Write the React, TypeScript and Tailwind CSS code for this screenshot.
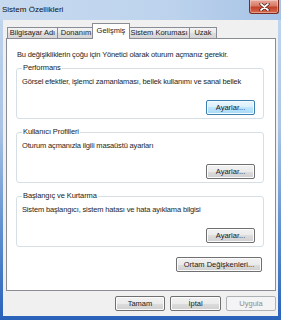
import React from "react";

const font = "font-['Liberation_Sans',Arial,sans-serif]";

function WinButton({
  label,
  width,
  focused,
  disabled,
}: {
  label: string;
  width: string;
  focused?: boolean;
  disabled?: boolean;
}) {
  const look = disabled
    ? "border-[#adb2b5] bg-[#f4f4f4] text-[#8d8d8d]"
    : focused
      ? "border-[#3c7fb1] bg-[linear-gradient(#eaf6fd,#d9f0fc_50%,#bee6fd_50%,#a7d9f5)] text-[#1a1a1a] shadow-[inset_0_0_0_1px_#f4fbff]"
      : "border-[#707070] bg-[linear-gradient(#f2f2f2,#ebebeb_50%,#dddddd_50%,#cfcfcf)] text-[#1a1a1a] shadow-[inset_0_0_0_1px_#fbfbfb]";
  return (
    <div
      className={`${width} flex h-[15px] items-center justify-center rounded-[2px] border text-[7.5px] leading-none ${look}`}
    >
      {label}
    </div>
  );
}

function GroupBox({ title, text, className }: { title: string; text: string; className?: string }) {
  return (
    <fieldset
      className={`ml-[9px] mr-[11px] flex flex-col rounded-[3px] border border-[#d5dfe5] px-[5px] pb-[3px] ${className ?? ""}`}
    >
      <legend className="px-[1px] text-[7.5px] leading-[10px] tracking-[-0.1px] text-[#222]">{title}</legend>
      <p className="mt-[4px] text-[7.5px] leading-[10px] tracking-[-0.15px] text-[#1e1e1e]">{text}</p>
      <div className="mr-[3px] mt-[13px] self-end">
        <WinButton label="Ayarlar..." width="w-[49px]" focused={title === "Performans"} />
      </div>
    </fieldset>
  );
}

function Tab({ label, className, selected }: { label: string; className: string; selected?: boolean }) {
  return selected ? (
    <div
      className={`relative z-20 flex h-[16px] items-start justify-center border border-b-0 border-[#898c95] bg-white pt-[2px] text-[7.5px] leading-[10px] text-[#1e1e1e] ${className}`}
    >
      {label}
    </div>
  ) : (
    <div
      className={`flex h-[12px] items-center justify-center border border-[#898c95] bg-[linear-gradient(#f4f4f4,#e6e6e6_50%,#dddddd_50%,#d6d6d6)] text-[7.5px] leading-none text-[#1e1e1e] ${className}`}
    >
      {label}
    </div>
  );
}

export default function App() {
  return (
    <div
      className={`${font} flex h-[320px] w-[281px] flex-col overflow-hidden bg-[linear-gradient(180deg,#c3d7ee_0%,#aac4e5_40%,#5f8fcf_72%,#2a62ba_100%)]`}
    >
      <div className="flex h-[20px] shrink-0 items-start justify-between bg-[linear-gradient(90deg,#c6d9ef,#bdd3ed_60%,#a6c2e5)]">
        <span className="ml-[2px] mt-[5px] text-[8px] leading-[10px] text-[#111]">Sistem Özellikleri</span>
        <div className="mr-[2px] flex h-[14px] w-[30px] items-center justify-center rounded-b-[3px] border border-t-0 border-[#7a2a1e] bg-[linear-gradient(#e9a89a,#d77b66_45%,#c2412a_55%,#d86a4f)] shadow-[inset_0_0_0_1px_rgba(255,255,255,0.35)]">
          <svg width="11" height="8" viewBox="0 0 11 8">
            <path d="M2 1 L9 7 M9 1 L2 7" stroke="#4a1a12" strokeWidth="3.2" strokeLinecap="round" />
            <path d="M2 1 L9 7 M9 1 L2 7" stroke="#ffffff" strokeWidth="1.7" strokeLinecap="round" />
          </svg>
        </div>
      </div>

      <div className="mx-[3px] mb-[4px] flex flex-1 flex-col bg-[#f0f0f0] pl-[3px] pr-[2px] pt-[3px]">
        <div className="relative z-10 flex h-[16px] items-end">
          <Tab label="Bilgisayar Adı" className="ml-[1px] w-[51px]" />
          <Tab label="Donanım" className="-ml-px w-[38px]" />
          <Tab label="Gelişmiş" className="-ml-[3px] w-[38px]" selected />
          <Tab label="Sistem Koruması" className="-ml-[2px] w-[62px]" />
          <Tab label="Uzak" className="-ml-px w-[28px]" />
        </div>

        <div className="-mt-px flex h-[253px] flex-col border border-[#898c95] bg-white">
          <p className="ml-[10px] mt-[11px] text-[7.5px] leading-[10px] tracking-[-0.15px] text-[#1e1e1e]">
            Bu değişikliklerin çoğu için Yönetici olarak oturum açmanız gerekir.
          </p>
          <GroupBox
            title="Performans"
            text="Görsel efektler, işlemci zamanlaması, bellek kullanımı ve sanal bellek"
            className="mt-[3px]"
          />
          <GroupBox
            title="Kullanıcı Profilleri"
            text="Oturum açmanızla ilgili masaüstü ayarları"
            className="mt-[8px]"
          />
          <GroupBox
            title="Başlangıç ve Kurtarma"
            text="Sistem başlangıcı, sistem hatası ve hata ayıklama bilgisi"
            className="mt-[8px]"
          />
          <div className="mr-[13px] mt-[10px] self-end">
            <WinButton label="Ortam Değişkenleri..." width="w-[86px]" />
          </div>
        </div>

        <div className="mt-[5px] flex justify-end gap-[5px]">
          <WinButton label="Tamam" width="w-[50px]" />
          <WinButton label="İptal" width="w-[51px]" />
          <WinButton label="Uygula" width="w-[50px]" disabled />
        </div>
      </div>
    </div>
  );
}
